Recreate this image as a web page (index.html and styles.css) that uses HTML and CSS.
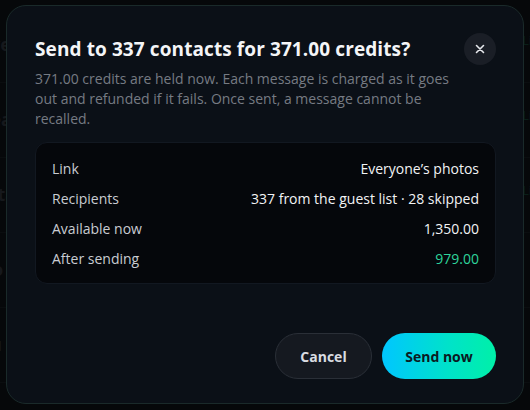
FILE: index.html
```html
<!DOCTYPE html>
<html lang="en">
<head>
<meta charset="utf-8">
<link rel="stylesheet" href="styles.css">
</head>
<body>
<div class="page">
  <div class="bg-list">
    <div class="bg-row"><span class="bg-a">Event</span><span class="bg-g">Lit</span></div>
    <div class="bg-row"><span class="bg-a">Team</span><span class="bg-g">Lit</span></div>
    <div class="bg-row"><span class="bg-a">Rita</span><span class="bg-g">Lit</span></div>
    <div class="bg-row"><span class="bg-a">Bo</span><span class="bg-g"></span></div>
    <div class="bg-row"><span class="bg-a">Lu</span><span class="bg-g"></span></div>
  </div>
  <div class="overlay">
    <div class="modal">
      <div class="head">
        <h1 class="title">Send to 337 contacts for 371.00 credits?</h1>
        <button class="close" aria-label="Close">
          <svg width="10" height="10" viewBox="0 0 10 10"><path d="M1.5 1.5 L8.5 8.5 M8.5 1.5 L1.5 8.5" stroke="#e6e8ec" stroke-width="1.6" stroke-linecap="round"/></svg>
        </button>
      </div>
      <p class="desc">371.00 credits are held now. Each message is charged as it goes out and refunded if it fails. Once sent, a message cannot be recalled.</p>
      <div class="card">
        <div class="row"><span class="label">Link</span><span class="value">Everyone’s photos</span></div>
        <div class="row"><span class="label">Recipients</span><span class="value">337 from the guest list · 28 skipped</span></div>
        <div class="row"><span class="label">Available now</span><span class="value">1,350.00</span></div>
        <div class="row"><span class="label">After sending</span><span class="value green">979.00</span></div>
      </div>
      <div class="actions">
        <button class="btn cancel">Cancel</button>
        <button class="btn send">Send now</button>
      </div>
    </div>
  </div>
</div>
</body>
</html>
```

FILE: styles.css
```css
* { box-sizing: border-box; }
html, body { margin: 0; padding: 0; }
body {
  width: 530px;
  height: 410px;
  overflow: hidden;
  background: #07090c;
  font-family: "Open Sans", "Noto Sans", sans-serif;
}
.page {
  position: relative;
  width: 530px;
  height: 410px;
}
.bg-list {
  display: flex;
  flex-direction: column;
  padding-top: 8px;
}
.bg-row {
  height: 75px;
  border-bottom: 1px solid #111418;
  display: flex;
  justify-content: space-between;
  align-items: flex-start;
  padding: 24px 0 0 0;
  margin-left: -20px;
  margin-right: -6px;
}
.bg-a { color: #2a2e33; font-size: 18px; font-weight: 700; }
.bg-g { color: #0f3a2c; font-size: 12px; }
.overlay {
  position: absolute;
  inset: 0;
  background: rgba(5, 7, 10, 0.55);
  padding: 5px 6px 6px 6px;
}
.modal {
  width: 518px;
  height: 399px;
  background: #0b1017;
  border: 1px solid #1a2a2a;
  border-radius: 20px;
  padding: 26px 27px 24px 28px;
  display: flex;
  flex-direction: column;
}
.head {
  display: flex;
  justify-content: space-between;
  align-items: flex-start;
}
.title {
  margin: 4px 0 0 0;
  font-size: 19px;
  font-weight: 700;
  color: #f4f5f7;
  letter-spacing: 0.1px;
  line-height: 26px;
}
.close {
  width: 32px;
  height: 32px;
  border-radius: 50%;
  border: none;
  background: #1a1e26;
  display: flex;
  align-items: center;
  justify-content: center;
  padding: 0;
  margin-top: 1px;
}
.desc {
  margin: 4px 0 0 0;
  font-size: 14px;
  line-height: 20px;
  color: #767b83;
  max-width: 425px;
}
.card {
  margin-top: 13px;
  background: #05070b;
  border: 1px solid #121821;
  border-radius: 12px;
  padding: 10px 16px 10px 16px;
  display: flex;
  flex-direction: column;
}
.row {
  display: flex;
  justify-content: space-between;
  align-items: center;
  height: 30px;
  font-size: 14px;
}
.label { color: #c9ccd2; }
.value { color: #f2f3f5; font-weight: 500; }
.value.green { color: #2ed49b; }
.actions {
  margin-top: auto;
  display: flex;
  justify-content: flex-end;
  gap: 10px;
}
.btn {
  height: 46px;
  border-radius: 23px;
  font-family: inherit;
  font-size: 14px;
  font-weight: 700;
  padding: 0;
}
.cancel {
  width: 97px;
  background: #151920;
  border: 1px solid #2a2f37;
  color: #d9dce1;
}
.send {
  width: 114px;
  border: none;
  background: linear-gradient(90deg, #00c6ff 0%, #00e3c8 60%, #00f0a8 100%);
  color: #0b1a22;
}
```
